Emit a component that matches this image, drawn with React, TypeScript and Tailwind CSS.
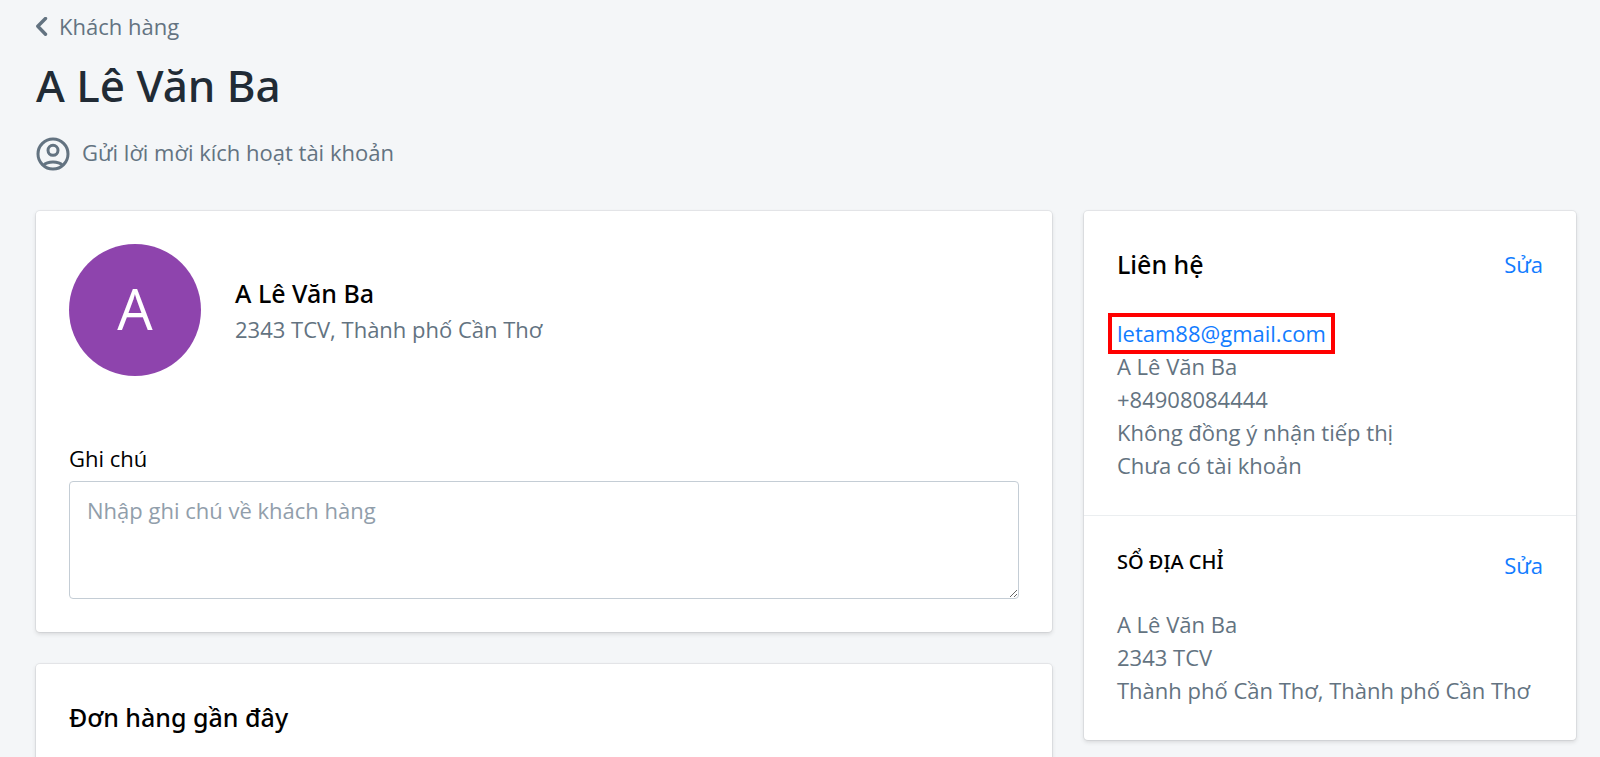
import React from 'react';

const contact = {
  name: 'A Lê Văn Ba',
  email: 'letam88@gmail.com',
  details: ['A Lê Văn Ba', '+84908084444', 'Không đồng ý nhận tiếp thị', 'Chưa có tài khoản'],
  address: ['A Lê Văn Ba', '2343 TCV', 'Thành phố Cần Thơ, Thành phố Cần Thơ'],
};

const Card = ({ children }: { children: React.ReactNode }) => (
  <section className="rounded-[4px] bg-white shadow-[0_0_0_1px_rgba(63,63,68,0.07),0_2px_4px_0_rgba(63,63,68,0.17)]">
    {children}
  </section>
);

const EditButton = () => (
  <button type="button" className="cursor-pointer text-[#127cff]">
    Sửa
  </button>
);

const ChevronIcon = () => (
  <svg className="h-5 w-3" viewBox="0 0 12 20" fill="none" stroke="currentColor" strokeWidth="3.4" strokeLinecap="round" strokeLinejoin="round">
    <path d="M9.500 1.500L1.800 9.300l7.700 7.900" />
  </svg>
);

const AccountIcon = () => (
  <svg className="size-[34px]" viewBox="0 0 34 34" fill="none" stroke="currentColor" strokeWidth="3">
    <circle cx="17" cy="17" r="15" />
    <circle cx="17" cy="13.300" r="5" />
    <path d="M7.500 28.200C9.700 25.900 13 25 17 25s7.300.9 9.500 3.200" />
  </svg>
);

const App = () => {
  return (
    <div className="min-h-screen bg-[#f4f6f8] pt-[10px] pr-6 pl-9 font-['Open_Sans','Noto_Sans',sans-serif] text-[22px] leading-[33px] text-[#637381]">
      <header className="mb-10">
        <a href="#customers" className="flex items-center gap-[11px]">
          <ChevronIcon />
          <span>Khách hàng</span>
        </a>
        <h1 className="mt-3 font-['Noto_Sans',sans-serif] text-[44px] leading-[60px] font-medium text-[#212b35]">{contact.name}</h1>
        <button type="button" className="mt-[22px] flex cursor-pointer items-start gap-3 leading-[30px]">
          <AccountIcon />
          <span>Gửi lời mời kích hoạt tài khoản</span>
        </button>
      </header>

      <div className="grid grid-cols-[2.065fr_1fr] items-start gap-8">
        <main className="flex flex-col gap-8">
          <Card>
            <div className="p-[33px]">
              <div className="flex items-center gap-[34px]">
                <div className="flex size-[132px] items-center justify-center rounded-full bg-[#8e44ad] pb-1 text-[56px] text-white">
                  A
                </div>
                <div>
                  <h2 className="mb-[2px] font-['Noto_Sans',sans-serif] text-[25px] leading-[36px] font-medium text-black">{contact.name}</h2>
                  <p>2343 TCV, Thành phố Cần Thơ</p>
                </div>
              </div>
              <label htmlFor="note" className="mt-[66px] mb-[6px] block text-black">
                Ghi chú
              </label>
              <textarea
                id="note"
                placeholder="Nhập ghi chú về khách hàng"
                className="block h-[118px] w-full rounded-[4px] border border-[#c4cdd5] px-[17px] py-3 placeholder:text-[#919eab]"
              />
            </div>
          </Card>
          <Card>
            <div className="p-[33px]">
              <h2 className="font-['Noto_Sans',sans-serif] text-[25px] leading-[41px] font-medium text-black">Đơn hàng gần đây</h2>
            </div>
          </Card>
        </main>

        <aside>
          <Card>
            <div className="p-[33px]">
              <div className="mb-8 flex items-center justify-between">
                <h2 className="font-['Noto_Sans',sans-serif] text-[25px] leading-[41px] font-medium text-black">Liên hệ</h2>
                <EditButton />
              </div>
              <div className="relative w-fit">
                <a href="mailto:letam88@gmail.com" className="block text-[#127cff]">{contact.email}</a>
                <span className="pointer-events-none absolute -inset-x-[9px] -inset-y-1 border-4 border-[#ff0000]" />
              </div>
              {contact.details.map((line) => (
                <p key={line}>{line}</p>
              ))}
            </div>
            <div className="border-t border-[#ebeef0] p-[33px]">
              <div className="mb-[26px] flex items-start justify-between">
                <h3 className="font-['Noto_Sans',sans-serif] text-[20px] leading-[26px] font-medium text-black uppercase">Sổ địa chỉ</h3>
                <EditButton />
              </div>
              {contact.address.map((line) => (
                <p key={line}>{line}</p>
              ))}
            </div>
          </Card>
        </aside>
      </div>
    </div>
  );
};

export default App;
